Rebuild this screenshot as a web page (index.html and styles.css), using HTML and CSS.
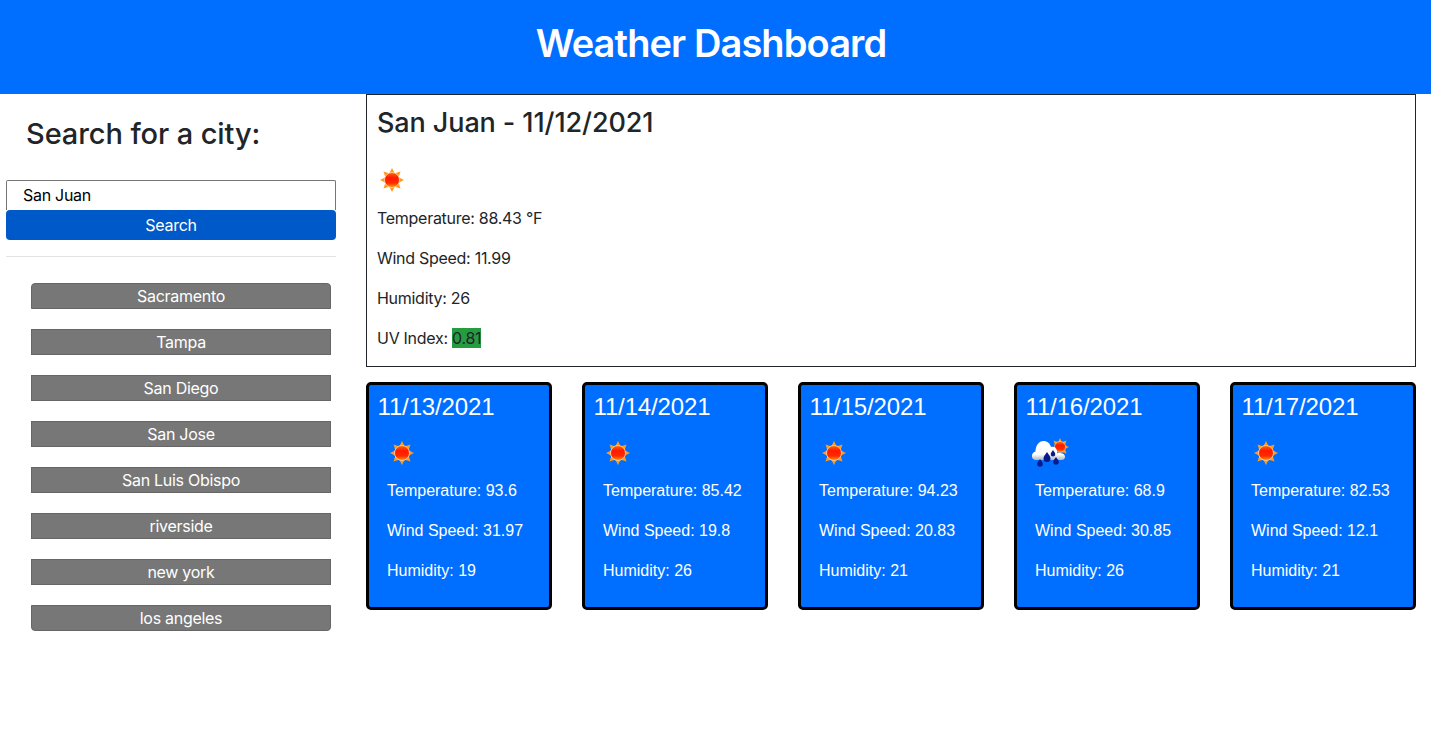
FILE: index.html
```html
<!DOCTYPE html>
<html lang="en">
<head>
    <meta charset="UTF-8" />
    <title>Weather Dashboard</title>
    <link rel="stylesheet" href="styles.css">
</head>
<body>
<svg class="defs" width="0" height="0" aria-hidden="true">
    <defs>
        <linearGradient id="sunFill" x1="0" y1="0" x2="0" y2="1">
            <stop offset="0" stop-color="#ff6a00" />
            <stop offset="0.35" stop-color="#ff1a00" />
            <stop offset="0.7" stop-color="#ff2a00" />
            <stop offset="1" stop-color="#ffa000" />
        </linearGradient>
        <linearGradient id="cloudFill" x1="0" y1="0" x2="0" y2="1">
            <stop offset="0" stop-color="#ffffff" />
            <stop offset="0.7" stop-color="#ffffff" />
            <stop offset="1" stop-color="#aeb4c0" />
        </linearGradient>
        <symbol id="sun" viewBox="0 0 40 40">
            <path fill="#ff9a1f" d="M20 8l2.500 5h-5zM20 32l-2.500-5h5zM8 20l5-2.500v5zM32 20l-5 2.500v-5zM11.500 11.500l5.500 1.800-3.700 3.700zM28.500 28.500l-5.500-1.800 3.700-3.700zM28.500 11.500l-1.800 5.500-3.700-3.700zM11.500 28.500l1.800-5.500 3.700 3.700z" />
            <circle cx="20" cy="20" r="7.500" fill="url(#sunFill)" stroke="#ffdcae" stroke-width="0.8" />
        </symbol>
        <symbol id="rain" viewBox="0 0 40 40">
            <path fill="#ff9a1f" d="M30 5l2 4.500h-4zM39 14l-4.500 2v-4zM23.500 7.500l4.500 1.500-3 3zM36.500 7.500l-1.500 4.500-3-3zM36.500 20.500l-4.500-1.500 3-3z" />
            <circle cx="30" cy="14" r="5.500" fill="url(#sunFill)" stroke="#ffdcae" stroke-width="0.6" />
            <path fill="url(#cloudFill)" d="M6 27c-3 0-4.500-2.500-4-5 .4-2 1.800-3.200 3.500-3.600C5.500 12.500 9 8 13.500 8c3.800 0 6.700 2.600 7.500 6 2.500-.8 5 .5 5.800 3 .5 1.500.4 2.300.2 3.200 3-.7 7.500-.3 8 3 .3 2.300-1.200 3.800-3.500 3.800z" />
            <path fill="#0a1a8c" d="M17 19c1.900 3 3.500 4.300 3.500 6.500a3.500 3.500 0 0 1-7 0c0-2.200 1.600-3.500 3.500-6.500zM23 17c1.100 1.800 2.300 2.800 2.300 4.200a2.300 2.300 0 0 1-4.600 0c0-1.400 1.200-2.400 2.300-4.200zM10 26c1.300 2.100 2.800 3.200 2.800 5a2.800 2.800 0 0 1-5.600 0c0-1.800 1.500-2.900 2.800-5zM26 24c1.300 2.100 2.800 3.200 2.800 5a2.800 2.800 0 0 1-5.600 0c0-1.800 1.500-2.900 2.800-5z" />
        </symbol>
    </defs>
</svg>

<header class="site-header">
    <h1>Weather Dashboard</h1>
</header>

<div class="page">
    <aside class="sidebar">
        <h3>Search for a city:</h3>
        <input class="city-input" type="text" value="San Juan" />
        <button class="search-btn">Search</button>
        <hr />
        <div class="history">
            <button>Sacramento</button>
            <button>Tampa</button>
            <button>San Diego</button>
            <button>San Jose</button>
            <button>San Luis Obispo</button>
            <button>riverside</button>
            <button>new york</button>
            <button>los angeles</button>
        </div>
    </aside>

    <main class="content">
        <section class="today">
            <h2>San Juan - 11/12/2021</h2>
            <svg class="icon"><use href="#sun" /></svg>
            <p>Temperature: 88.43 °F</p>
            <p>Wind Speed: 11.99</p>
            <p>Humidity: 26</p>
            <p>UV Index: <span class="uv">0.81</span></p>
        </section>

        <section class="forecast">
            <div class="card">
                <h4>11/13/2021</h4>
                <svg class="icon"><use href="#sun" /></svg>
                <p>Temperature: 93.6</p>
                <p>Wind Speed: 31.97</p>
                <p>Humidity: 19</p>
            </div>
            <div class="card">
                <h4>11/14/2021</h4>
                <svg class="icon"><use href="#sun" /></svg>
                <p>Temperature: 85.42</p>
                <p>Wind Speed: 19.8</p>
                <p>Humidity: 26</p>
            </div>
            <div class="card">
                <h4>11/15/2021</h4>
                <svg class="icon"><use href="#sun" /></svg>
                <p>Temperature: 94.23</p>
                <p>Wind Speed: 20.83</p>
                <p>Humidity: 21</p>
            </div>
            <div class="card">
                <h4>11/16/2021</h4>
                <svg class="icon"><use href="#rain" /></svg>
                <p>Temperature: 68.9</p>
                <p>Wind Speed: 30.85</p>
                <p>Humidity: 26</p>
            </div>
            <div class="card">
                <h4>11/17/2021</h4>
                <svg class="icon"><use href="#sun" /></svg>
                <p>Temperature: 82.53</p>
                <p>Wind Speed: 12.1</p>
                <p>Humidity: 21</p>
            </div>
        </section>
    </main>
</div>
</body>
</html>
```

FILE: styles.css
```css
* { box-sizing: border-box; }
body {
    font-family: Inter, 'Liberation Sans', sans-serif;
    font-size: 16px;
    line-height: 24px;
    letter-spacing: -0.28px;
    color: #212529;
    background: #fff;
    margin: 0;
}
input, button {
    font: 16px Inter, 'Liberation Sans', sans-serif;
    letter-spacing: -0.28px;
}
.defs { position: absolute; }

.site-header {
    background: #006fff;
    color: #fff;
    height: 94px;
    display: flex;
    align-items: center;
    justify-content: center;
    padding: 0 9px 8px 0;
}
.site-header h1 {
    font-size: 38px;
    font-weight: 600;
    line-height: 46px;
    letter-spacing: -0.9px;
    margin: 0;
}

.page {
    display: flex;
}
.sidebar {
    width: 366px;
    padding: 0 30px 0 6px;
    flex: none;
}
.sidebar h3 {
    font-size: 29px;
    font-weight: 500;
    line-height: 34px;
    letter-spacing: -0.1px;
    margin: 0;
    padding: 23px 0 29px 20px;
}
.city-input {
    display: block;
    width: 100%;
    height: 30px;
    padding: 0 16px 2px;
    border: 1px solid #767676;
    border-bottom: none;
    border-radius: 2px 2px 0 0;
    color: #000;
}
.search-btn {
    display: block;
    width: 100%;
    height: 30px;
    padding: 0;
    border: none;
    border-radius: 4px;
    background: #0059c8;
    color: #fff;
}
.sidebar hr {
    border: none;
    border-top: 1px solid #e3e3e3;
    margin: 16px 0 26px;
}
.history {
    display: flex;
    flex-direction: column;
    gap: 20px;
    padding-left: 25px;
    width: 325px;
}
.history button {
    height: 26px;
    padding: 0;
    background: #777;
    border: 1px solid #666;
    border-radius: 0;
    color: #fff;
}
.history button:first-child { border-radius: 4px 4px 0 0; }
.history button:last-child { border-radius: 0 0 4px 4px; }

.content {
    width: 1050px;
    flex: none;
}
.today {
    height: 273px;
    border: 1px solid #212529;
    padding: 10px;
}
.today h2 {
    font-size: 27px;
    font-weight: 500;
    line-height: 36px;
    letter-spacing: -0.1px;
    margin: 0 0 19px;
}
.today .icon {
    margin: 0 0 6px -5px;
}
.icon {
    display: block;
    width: 40px;
    height: 40px;
}
.today p {
    margin: 0 0 16px;
}
.uv {
    background: #259c40;
}

.forecast {
    display: flex;
    justify-content: space-between;
    margin-top: 15px;
}
.card {
    width: 186px;
    height: 228px;
    background: #006fff;
    border: 3px solid #000;
    border-radius: 5px;
    color: #fff;
    font-family: 'Liberation Sans', Arial, sans-serif;
    letter-spacing: 0;
    padding: 7px 9px;
}
.card h4 {
    font-size: 24px;
    font-weight: 400;
    line-height: 29px;
    letter-spacing: -0.15px;
    margin: 0 0 12px -0.5px;
}
.card .icon {
    margin: 0 0 6px 4px;
}
.card p {
    margin: 0 0 16px 9px;
}
```
